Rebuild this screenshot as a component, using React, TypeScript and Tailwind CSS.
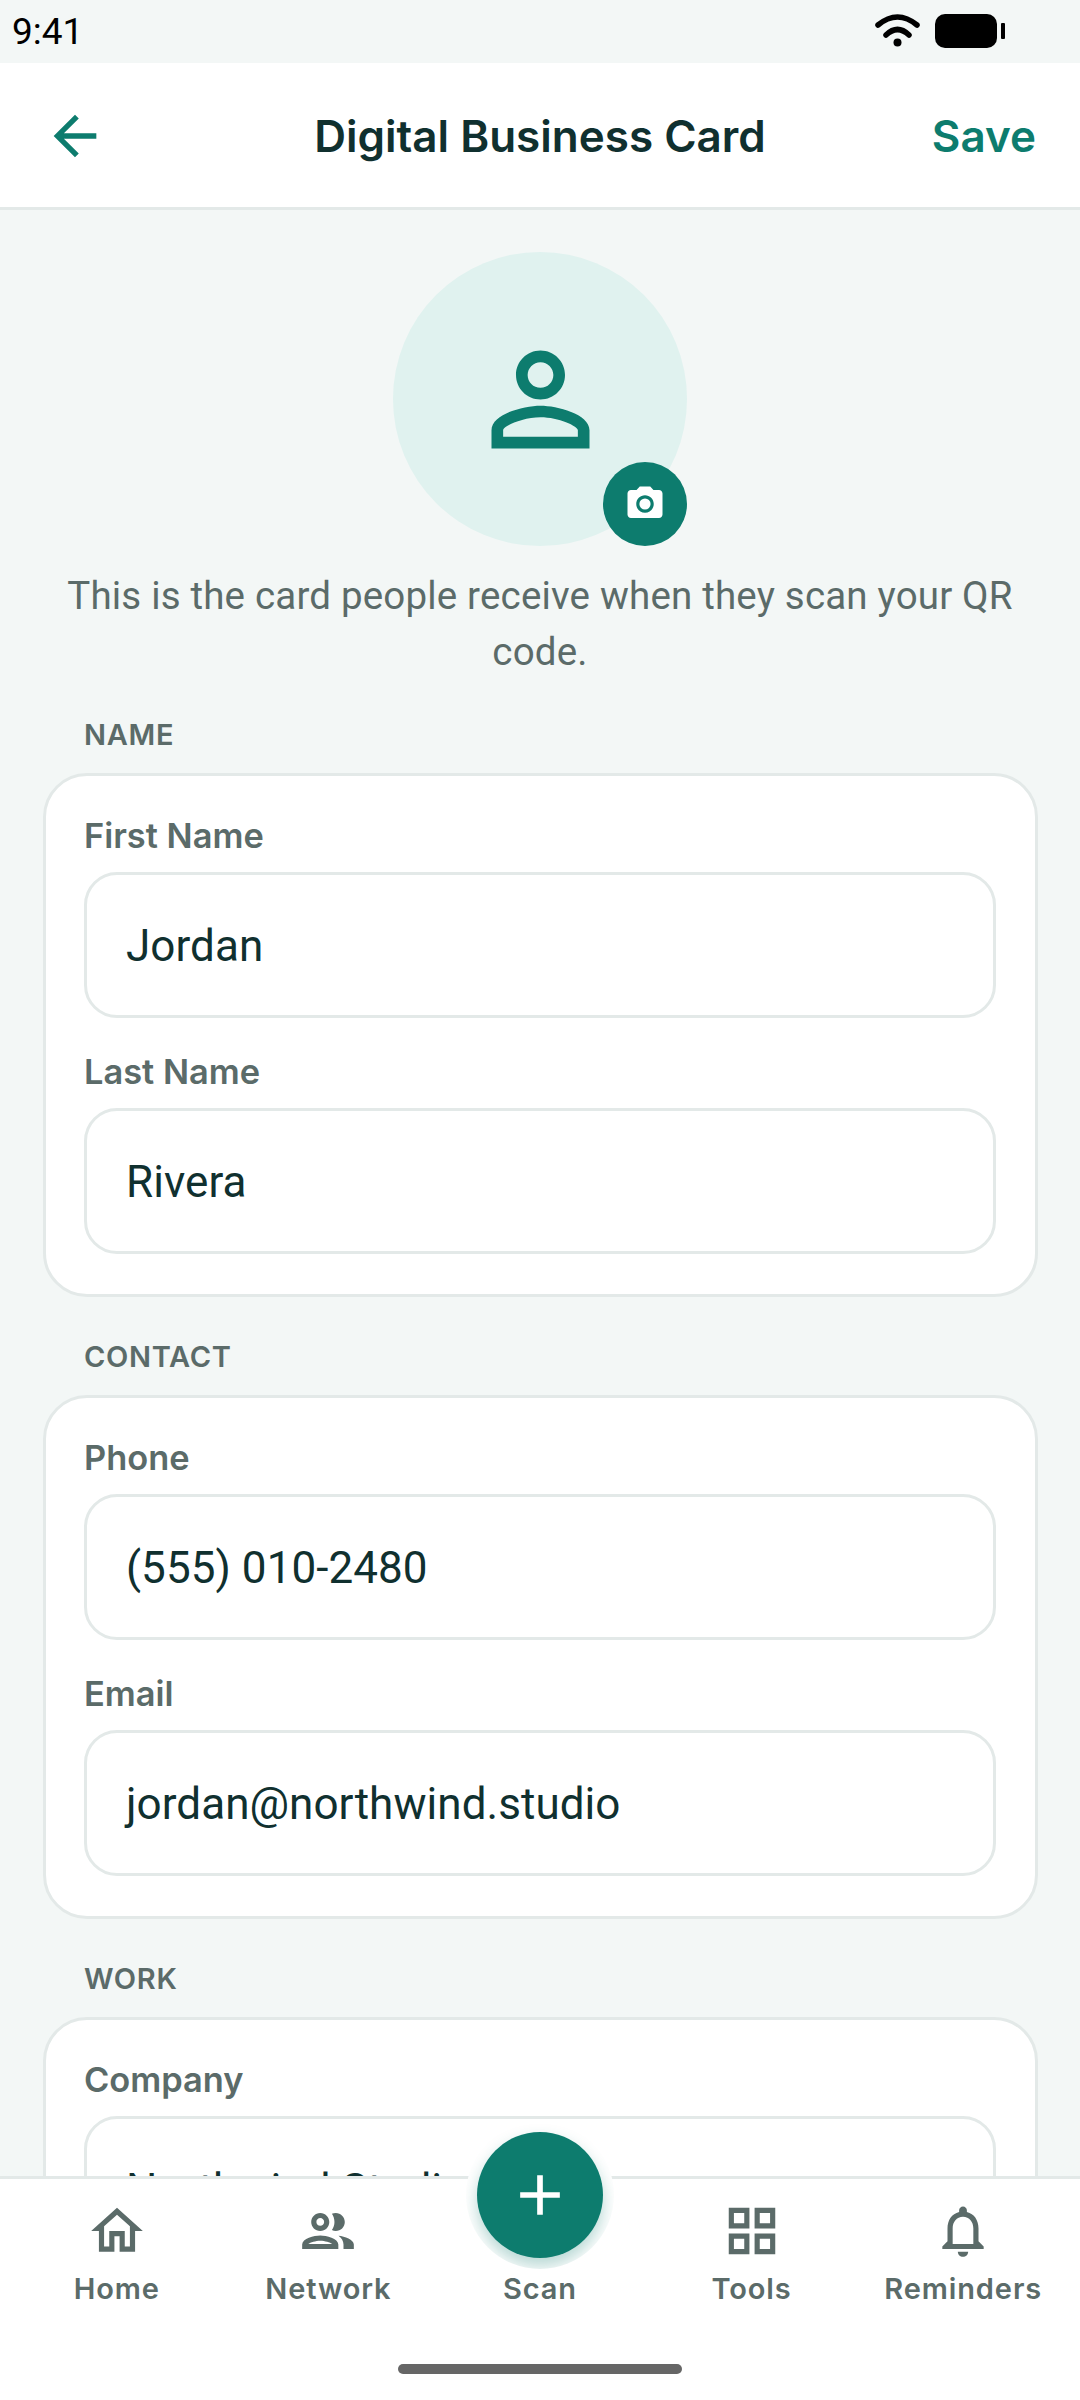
const TEAL = "#0d7c6e";
const GREY = "#5b6b69";

function Field({ label, value, gap }: { label: string; value: string; gap?: boolean }) {
  return (
    <div className={gap ? "mt-[33px]" : ""}>
      <div className="h-[40px] font-['Inter',sans-serif] text-[34.4px] leading-[42px] font-semibold text-[#5b6b69]">{label}</div>
      <div className="mt-[17px] flex h-[146px] items-center rounded-[33px] border-[3px] border-[#e3e9e8] bg-white pt-[1px] pl-[39px] font-['Roboto',sans-serif] text-[44px] tracking-[0.06px] text-[#10302f]">
        {value}
      </div>
    </div>
  );
}

function Section({ title, fields }: { title: string; fields: [string, string][] }) {
  return (
    <section className="mb-[38px]">
      <div className="h-[40px] pl-[41px] font-['Inter',sans-serif] text-[29px] leading-[44px] font-semibold tracking-[0.7px] text-[#5b6b69]">{title}</div>
      <div className="mt-[20px] rounded-[44px] border-[3px] border-[#e3e9e8] bg-white pt-[39px] pr-[39px] pb-[40px] pl-[38px]">
        {fields.map(([l, v], i) => (
          <Field key={l} label={l} value={v} gap={i > 0} />
        ))}
      </div>
    </section>
  );
}

function NavLabel({ label }: { label: string }) {
  return (
    <div className="mt-[7px] font-['Inter',sans-serif] text-[29px] leading-[40px] font-semibold tracking-[0.9px] whitespace-nowrap text-[#5b6b69]">{label}</div>
  );
}

function NavItem({ label, path }: { label: string; path: string }) {
  return (
    <div className="flex flex-1 flex-col items-center">
      <svg viewBox="0 0 24 24" className="h-[62px] w-[62px]" fill={GREY}>
        <path d={path} />
      </svg>
      <NavLabel label={label} />
    </div>
  );
}

export default function App() {
  return (
    <div className="flex h-[2400px] w-[1080px] flex-col overflow-hidden bg-[#f3f7f6]">
      <div className="flex h-[63px] shrink-0 items-center justify-between pr-[75px] pl-[12px]">
        <span className="font-['Roboto',sans-serif] text-[37px] leading-none text-black">9:41</span>
        <svg width="130" height="63" viewBox="0 0 130 63" fill="none">
          <path d="M3 25 Q22.5 9 42 25" stroke="#000" strokeWidth="5.5" strokeLinecap="round" />
          <path d="M11 35 Q22.5 24 34 35" stroke="#000" strokeWidth="5.5" strokeLinecap="round" />
          <circle cx="22.5" cy="42.5" r="4" fill="#000" />
          <rect x="60" y="14" width="62" height="34" rx="10" fill="#000" />
          <rect x="126" y="23" width="4" height="16" rx="1" fill="#000" />
        </svg>
      </div>

      <header className="relative flex h-[147px] shrink-0 items-center justify-center border-b-[3px] border-[#e3e9e8] bg-white pt-[2px]">
        <svg viewBox="0 0 24 24" className="absolute top-[41px] left-[43px] h-[64px] w-[64px]" fill={TEAL}>
          <path d="M20 11H7.83l5.59-5.59L12 4l-8 8 8 8 1.41-1.41L7.83 13H20v-2z" />
        </svg>
        <h1 className="font-['Inter',sans-serif] text-[44px] font-semibold text-[#10302f]">Digital Business Card</h1>
        <span className="absolute right-[44px] font-['Inter',sans-serif] text-[44px] font-semibold text-[#0d7c6e]">Save</span>
      </header>

      <main className="min-h-0 flex-1 overflow-hidden pt-[42px] pr-[42px] pl-[43px]">
        <div className="relative ml-[350px] flex h-[294px] w-[294px] items-center justify-center rounded-full bg-[#e0f2ef]">
          <svg viewBox="0 0 24 24" className="h-[147px] w-[147px]" fill={TEAL}>
            <path d="M12 5.9c1.16 0 2.1.94 2.1 2.1s-.94 2.1-2.1 2.1S9.9 9.16 9.9 8s.94-2.1 2.1-2.1m0 9c2.97 0 6.1 1.46 6.1 2.1v1.1H5.9V17c0-.64 3.13-2.1 6.1-2.1M12 4C9.79 4 8 5.79 8 8s1.79 4 4 4 4-1.79 4-4-1.79-4-4-4zm0 9c-2.67 0-8 1.34-8 4v3h16v-3c0-2.66-5.33-4-8-4z" />
          </svg>
          <div className="absolute right-0 bottom-0 flex h-[84px] w-[84px] items-center justify-center rounded-full bg-[#0d7c6e]">
            <svg viewBox="0 0 24 24" className="h-[42px] w-[42px]" fill="#fff">
              <circle cx="12" cy="12" r="3.2" />
              <path d="M9 2L7.17 4H4c-1.1 0-2 .9-2 2v12c0 1.1.9 2 2 2h16c1.1 0 2-.9 2-2V6c0-1.1-.9-2-2-2h-3.17L15 2H9zm3 15c-2.76 0-5-2.24-5-5s2.24-5 5-5 5 2.24 5 5-2.24 5-5 5z" />
            </svg>
          </div>
        </div>
        <p className="mt-[22px] mr-[1px] mb-[33px] text-center font-['Roboto',sans-serif] text-[38.5px] leading-[56px] tracking-[0.18px] text-[#5b6b69]">
          This is the card people receive when they scan your QR code.
        </p>
        <Section title="NAME" fields={[["First Name", "Jordan"], ["Last Name", "Rivera"]]} />
        <Section title="CONTACT" fields={[["Phone", "(555) 010-2480"], ["Email", "jordan@northwind.studio"]]} />
        <Section title="WORK" fields={[["Company", "Northwind Studio"], ["Title", "Product Designer"]]} />
      </main>

      <nav className="relative h-[224px] shrink-0 border-t-[3px] border-[#e3e9e8] bg-white">
        <div className="flex px-[11px] pt-[21px]">
          <NavItem label="Home" path="M12 5.69l5 4.5V18h-2v-6H9v6H7v-7.81l5-4.5M12 3L2 12h3v8h6v-6h2v6h6v-8h3L12 3z" />
          <NavItem label="Network" path="M9 13.75c-2.34 0-7 1.17-7 3.5V19h14v-1.75c0-2.33-4.66-3.5-7-3.5zM4.34 17c.84-.58 2.87-1.25 4.66-1.25s3.82.67 4.66 1.25H4.34zM9 12c1.93 0 3.5-1.57 3.5-3.5S10.93 5 9 5 5.5 6.57 5.5 8.5 7.07 12 9 12zm0-5c.83 0 1.5.67 1.5 1.5S9.83 10 9 10s-1.5-.67-1.5-1.5S8.17 7 9 7zm7.04 6.81c1.16.84 1.96 1.96 1.96 3.44V19h4v-1.75c0-2.02-3.5-3.17-5.96-3.44zM15 12c1.93 0 3.5-1.57 3.5-3.5S16.93 5 15 5c-.54 0-1.04.13-1.5.35.63.89 1 1.98 1 3.15s-.37 2.26-1 3.15c.46.22.96.35 1.5.35z" />
          <div className="flex flex-1 flex-col items-center">
            <div className="h-[62px]" />
            <NavLabel label="Scan" />
          </div>
          <NavItem label="Tools" path="M3 3v8h8V3H3zm6 6H5V5h4v4zm-6 4v8h8v-8H3zm6 6H5v-4h4v4zm4-16v8h8V3h-8zm6 6h-4V5h4v4zm-6 4v8h8v-8h-8zm6 6h-4v-4h4v4z" />
          <NavItem label="Reminders" path="M12 22c1.1 0 2-.9 2-2h-4c0 1.1.9 2 2 2zm6-6v-5c0-3.07-1.63-5.64-4.5-6.32V4c0-.83-.67-1.5-1.5-1.5s-1.5.67-1.5 1.5v.68C7.64 5.36 6 7.92 6 11v5l-2 2v1h16v-1l-2-2zm-2 1H8v-6c0-2.48 1.51-4.5 4-4.5s4 2.02 4 4.5v6z" />
        </div>
        <div className="absolute top-[-58px] left-[466px] flex h-[148px] w-[148px] items-center justify-center overflow-hidden rounded-full bg-white">
          <div className="flex h-[126px] w-[126px] items-center justify-center rounded-full bg-[#0d7c6e] shadow-[0_8px_16px_rgba(13,124,110,0.3)]">
            <svg viewBox="0 0 24 24" className="h-[68px] w-[68px]" fill="#fff">
              <path d="M19 13h-6v6h-2v-6H5v-2h6V5h2v6h6v2z" />
            </svg>
          </div>
        </div>
        <div className="absolute top-[185px] left-[398px] h-[10px] w-[284px] rounded-full bg-[#666666]" />
      </nav>
    </div>
  );
}
